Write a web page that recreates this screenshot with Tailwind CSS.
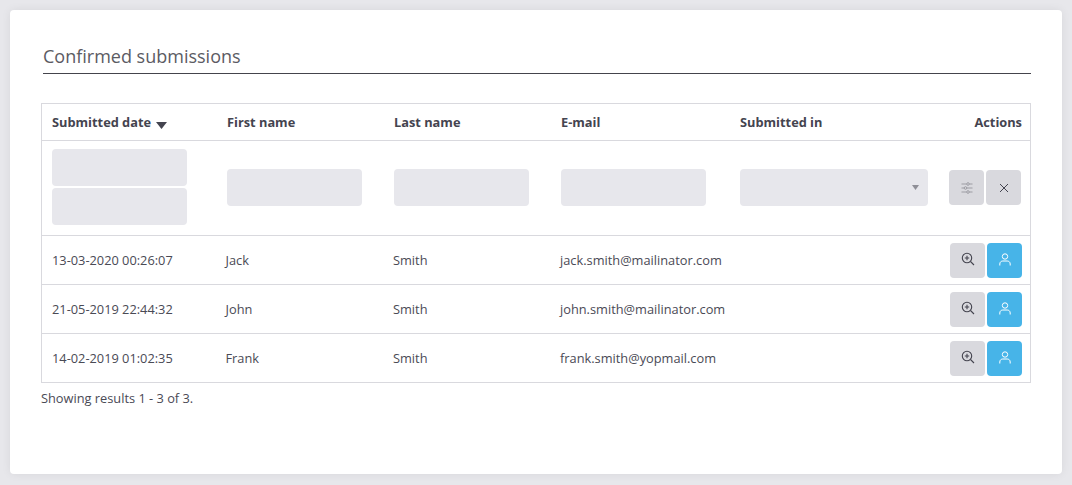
<!DOCTYPE html>
<html><head><meta charset="utf-8"><script src="https://cdn.jsdelivr.net/npm/@tailwindcss/browser@4"></script></head>
<body class="m-0 bg-[#e7e7eb]">
<div class="w-[1072px] h-[485px] p-[10px] pb-[11px] overflow-hidden font-['Open_Sans',sans-serif] text-[#4a4a55]">
<div class="bg-white rounded-[4px] h-[464px] pt-[33px] pl-[31px] pr-[31px] shadow-[0_0_10px_rgba(0,0,30,0.07)]">
  <h2 class="ml-[2px] h-[31px] border-b border-[#44444c] text-[18px] leading-[26px] font-normal text-[#5b5b63]">Confirmed submissions</h2>
  <div class="mt-[29px] border border-[#d9d9de] h-[280px] w-[990px]">
    <div class="flex h-[37px] items-center pt-[2px] text-[12.8px] font-bold text-[#44444f] border-b border-[#d9d9de]">
      <div class="w-[185px] pl-[10px] flex items-center">Submitted date<svg class="ml-[5px] mt-[5px]" width="11" height="7" viewBox="0 0 11 7"><path d="M0 0h11L5.500 7z" fill="#44444f"/></svg></div>
      <div class="w-[167px]">First name</div>
      <div class="w-[167px]">Last name</div>
      <div class="w-[179px]">E-mail</div>
      <div class="w-[150px]">Submitted in</div>
      <div class="flex-1 pr-[8px] text-right">Actions</div>
    </div>
    <div class="flex h-[95px] pb-[2px] items-center border-b border-[#d9d9de]">
      <div class="w-[185px] pl-[10px] flex flex-col gap-[2px]">
        <div class="w-[135px] h-[37px] rounded-[4px] bg-[#e7e7ec]"></div>
        <div class="w-[135px] h-[37px] rounded-[4px] bg-[#e7e7ec]"></div>
      </div>
      <div class="w-[167px]"><div class="w-[135px] h-[37px] rounded-[4px] bg-[#e7e7ec]"></div></div>
      <div class="w-[167px]"><div class="w-[135px] h-[37px] rounded-[4px] bg-[#e7e7ec]"></div></div>
      <div class="w-[179px]"><div class="w-[145px] h-[37px] rounded-[4px] bg-[#e7e7ec]"></div></div>
      <div class="w-[209px]"><div class="w-[188px] h-[37px] rounded-[4px] bg-[#e7e7ec] flex items-center justify-end pr-[9px]"><svg width="7" height="5" viewBox="0 0 7 5"><path d="M0 0h7L3.500 5z" fill="#8f8f97"/></svg></div></div>
      <div class="flex gap-[2px] mt-[1px]">
        <div class="w-[35px] h-[35px] rounded-[4px] bg-[#d9d9de] flex items-center justify-center">
          <svg width="12" height="12" viewBox="0 0 12 12" fill="none" stroke="#85858d" stroke-width="0.7"><path d="M0.500 2h5M8.500 2h3M0.500 6h2.500M6 6h5.500M0.500 10h5M8.500 10h3"/><circle cx="7" cy="2" r="1.300"/><circle cx="4.500" cy="6" r="1.300"/><circle cx="7" cy="10" r="1.300"/></svg>
        </div>
        <div class="w-[35px] h-[35px] rounded-[4px] bg-[#d9d9de] flex items-center justify-center">
          <svg width="10" height="10" viewBox="0 0 10 10" fill="none" stroke="#44444f" stroke-width="1"><path d="M1 1l8 8M9 1l-8 8"/></svg>
        </div>
      </div>
    </div>
    <div class="flex h-[49px] pt-[2px] items-center border-b border-[#d9d9de] text-[12.8px]">
      <div class="w-[183.500px] pl-[10px]">13-03-2020 00:26:07</div><div class="w-[167.500px]">Jack</div><div class="w-[167px]">Smith</div><div class="w-[390px]">jack.smith@mailinator.com</div>
      <div class="flex gap-[2px] -mt-[2px]">
        <div class="w-[35px] h-[35px] rounded-[4px] bg-[#d9d9de] flex items-center justify-center"><svg class="-mt-[2px]" width="14" height="14" viewBox="0 0 14 14" fill="none" stroke="#44444f" stroke-width="1.100"><circle cx="6" cy="6" r="4.700"/><path d="M9.500 9.500L13 13M6 3.800v4.400M3.800 6h4.400"/></svg></div>
        <div class="w-[35px] h-[35px] rounded-[4px] bg-[#47b4e8] flex items-center justify-center"><svg class="-mt-[2px]" width="12" height="13" viewBox="0 0 12 13" fill="none" stroke="#fff" stroke-width="1"><circle cx="6" cy="3.500" r="2.700"/><path d="M0.800 12.500v-1.500c0-2 1.500-3 3-3h4.400c1.500 0 3 1 3 3v1.500"/></svg></div>
      </div>
    </div>
    <div class="flex h-[49px] pt-[2px] items-center border-b border-[#d9d9de] text-[12.8px]">
      <div class="w-[183.500px] pl-[10px]">21-05-2019 22:44:32</div><div class="w-[167.500px]">John</div><div class="w-[167px]">Smith</div><div class="w-[390px]">john.smith@mailinator.com</div>
      <div class="flex gap-[2px] -mt-[2px]">
        <div class="w-[35px] h-[35px] rounded-[4px] bg-[#d9d9de] flex items-center justify-center"><svg class="-mt-[2px]" width="14" height="14" viewBox="0 0 14 14" fill="none" stroke="#44444f" stroke-width="1.100"><circle cx="6" cy="6" r="4.700"/><path d="M9.500 9.500L13 13M6 3.800v4.400M3.800 6h4.400"/></svg></div>
        <div class="w-[35px] h-[35px] rounded-[4px] bg-[#47b4e8] flex items-center justify-center"><svg class="-mt-[2px]" width="12" height="13" viewBox="0 0 12 13" fill="none" stroke="#fff" stroke-width="1"><circle cx="6" cy="3.500" r="2.700"/><path d="M0.800 12.500v-1.500c0-2 1.500-3 3-3h4.400c1.500 0 3 1 3 3v1.500"/></svg></div>
      </div>
    </div>
    <div class="flex h-[48px] pt-[2px] items-center text-[12.8px]">
      <div class="w-[183.500px] pl-[10px]">14-02-2019 01:02:35</div><div class="w-[167.500px]">Frank</div><div class="w-[167px]">Smith</div><div class="w-[390px]">frank.smith@yopmail.com</div>
      <div class="flex gap-[2px] -mt-[2px]">
        <div class="w-[35px] h-[35px] rounded-[4px] bg-[#d9d9de] flex items-center justify-center"><svg class="-mt-[2px]" width="14" height="14" viewBox="0 0 14 14" fill="none" stroke="#44444f" stroke-width="1.100"><circle cx="6" cy="6" r="4.700"/><path d="M9.500 9.500L13 13M6 3.800v4.400M3.800 6h4.400"/></svg></div>
        <div class="w-[35px] h-[35px] rounded-[4px] bg-[#47b4e8] flex items-center justify-center"><svg class="-mt-[2px]" width="12" height="13" viewBox="0 0 12 13" fill="none" stroke="#fff" stroke-width="1"><circle cx="6" cy="3.500" r="2.700"/><path d="M0.800 12.500v-1.500c0-2 1.500-3 3-3h4.400c1.500 0 3 1 3 3v1.500"/></svg></div>
      </div>
    </div>
  </div>
  <p class="mt-[6px] text-[12.8px] leading-[18px]">Showing results 1 - 3 of 3.</p>
</div>
</div>
</body></html>
